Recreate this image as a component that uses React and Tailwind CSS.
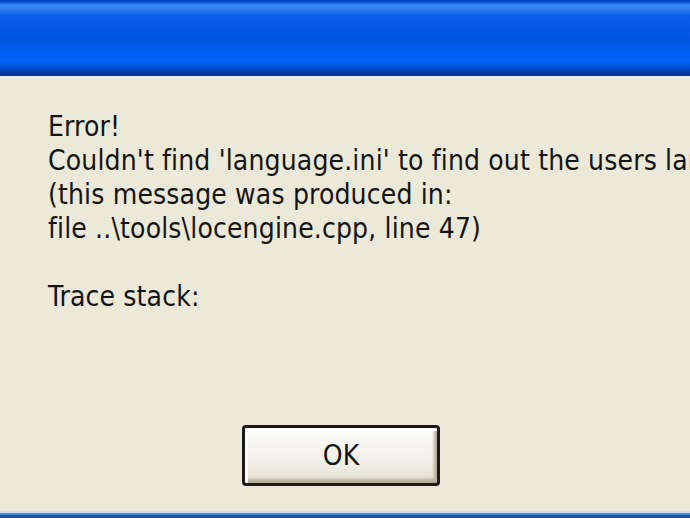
export default function App() {
  const font = { fontFamily: '"DejaVu Sans Condensed", "DejaVu Sans", sans-serif' };
  return (
    <div className="w-[690px] h-[518px] overflow-hidden flex flex-col bg-[#ece9d8]" style={font}>
      <div className="h-[76px] shrink-0 bg-[linear-gradient(to_bottom,#0040c8_0px,#0a50d8_2px,#3b8bf5_5px,#2f7ef0_9px,#0a5ce8_16px,#0055e0_40px,#0062f5_55px,#0066fa_62px,#0050d0_68px,#0038a0_73px,#00309a_76px)]" />
      <div className="h-[2px] shrink-0 bg-[#e8eef4]" />
      <div className="flex-1 flex flex-col pl-[48px] pt-[32px] text-[28px] leading-[34px] tracking-[0.15px] text-[#141414] whitespace-nowrap">
        <div>Error!</div>
        <div>Couldn't find 'language.ini' to find out the users language</div>
        <div>(this message was produced in:</div>
        <div>file ..\tools\locengine.cpp, line 47)</div>
        <div>&nbsp;</div>
        <div>Trace stack:</div>
        <div className="flex-1" />
      </div>
      <div className="shrink-0 flex justify-center pr-[8px] pb-[25px]">
        <button className="w-[198px] h-[61px] rounded-[4px] border-[3px] border-[#1a1a1a] bg-[linear-gradient(to_bottom,#fbfbf7_0%,#f2f0e8_60%,#e2ded0_100%)] shadow-[inset_3px_3px_0_#ffffff,inset_-3px_-4px_3px_#b3ae9c] text-[28px] text-[#141414] flex items-center justify-center" style={font}>
          OK
        </button>
      </div>
      <div className="h-[2px] shrink-0 bg-[#c8e4f6]" />
      <div className="h-[2px] shrink-0 bg-[#4b8ad8]" />
      <div className="h-[3px] shrink-0 bg-[#1f4f9e]" />
    </div>
  );
}
